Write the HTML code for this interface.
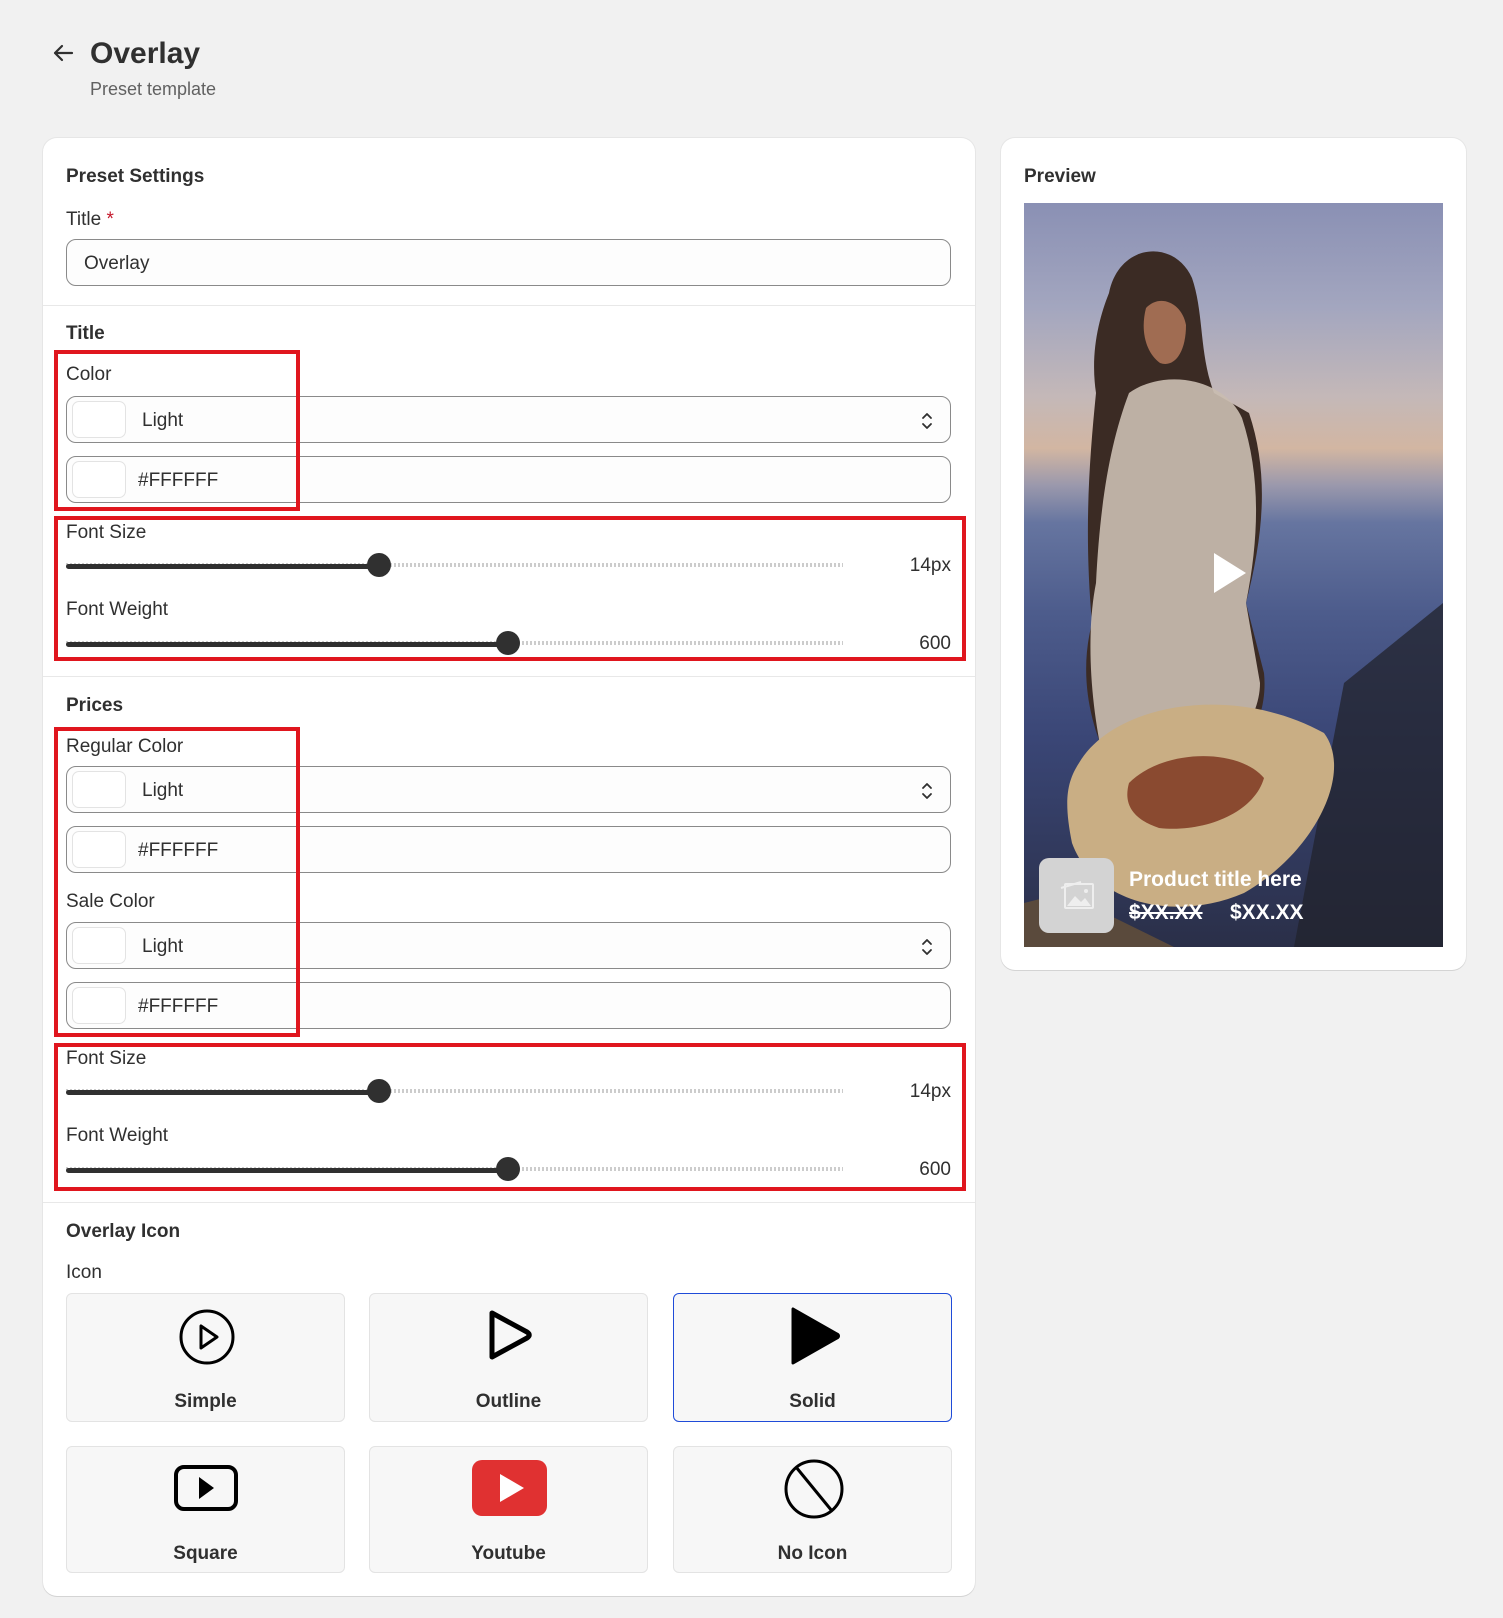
<!DOCTYPE html>
<html><head><meta charset="utf-8"><style>
*{box-sizing:border-box;margin:0;padding:0}
body{width:1503px;height:1618px;background:#f1f1f1;font-family:"Liberation Sans",Arial,sans-serif;color:#303030;position:relative;overflow:hidden}
.a{position:absolute}
.card{position:absolute;background:#fff;border-radius:14px;box-shadow:0 1px 0 #d4d4d4,0 0 0 1px #e6e6e6}
.h{font-weight:bold;font-size:19px}
.lbl{font-size:19px;color:#303030}
.inp{position:absolute;left:66px;width:885px;height:47px;border:1px solid #8a8a8a;border-radius:10px;background:#fdfdfd}
.sw{position:absolute;left:5px;top:4px;width:54px;height:37px;border:1px solid #e3e3e3;border-radius:7px;background:#fff}
.it{position:absolute;left:75px;top:13px;font-size:19px}
.div{position:absolute;left:43px;width:932px;height:1px;background:#e8e8e8}
.red{position:absolute;border:4px solid #e0161e}
.track{position:absolute;left:66px;width:777px;height:4px;background:repeating-linear-gradient(90deg,#ccc 0 2px,transparent 2px 4px);top:-2px}
.fill{position:absolute;left:0;top:-1px;height:5px;background:#303030;border-radius:3px}
.thumb{position:absolute;width:24px;height:24px;border-radius:50%;background:#303030;top:-12px}
.val{position:absolute;right:552px;font-size:19px}
.tile{position:absolute;width:279px;background:#f7f7f7;border:1px solid #e3e3e3;border-radius:6px}
.tl{position:absolute;width:100%;text-align:center;font-weight:bold;font-size:19px}
.ud{position:absolute;right:16px;top:13px}
</style></head><body>

<svg class="a" style="left:52px;top:43px" width="22" height="20" viewBox="0 0 22 20"><path d="M20 10H3M10 3L3 10l7 7" fill="none" stroke="#303030" stroke-width="2.2" stroke-linecap="round" stroke-linejoin="round"/></svg>
<div class="a" style="left:90px;top:37px;font-size:30px;font-weight:bold">Overlay</div>
<div class="a" style="left:90px;top:79px;font-size:18px;color:#616161">Preset template</div>

<div class="card" style="left:43px;top:138px;width:932px;height:1458px"></div>
<div class="a h" style="left:66px;top:166px">Preset Settings</div>
<div class="a lbl" style="left:66px;top:209px">Title <span style="color:#c4162a">*</span></div>
<div class="inp" style="top:239px"><div class="it" style="left:17px">Overlay</div></div>
<div class="div" style="top:305px"></div>

<div class="a h" style="left:66px;top:323px">Title</div>
<div class="a lbl" style="left:66px;top:364px">Color</div>
<div class="inp" style="top:396px"><div class="sw"></div><div class="it">Light</div>
<svg class="ud" width="14" height="22" viewBox="0 0 14 22"><path d="M3 8l4-4 4 4M3 14l4 4 4-4" fill="none" stroke="#303030" stroke-width="1.8" stroke-linecap="round" stroke-linejoin="round"/></svg></div>
<div class="inp" style="top:456px"><div class="sw"></div><div class="it" style="left:71px">#FFFFFF</div></div>
<div class="red" style="left:54px;top:350px;width:246px;height:161px"></div>

<div class="a lbl" style="left:66px;top:522px">Font Size</div>
<div class="a" style="left:0;top:565px;width:1503px"><div class="track"></div><div class="fill" style="left:66px;width:313px"></div><div class="thumb" style="left:367px"></div><div class="val" style="top:-10px">14px</div></div>
<div class="a lbl" style="left:66px;top:599px">Font Weight</div>
<div class="a" style="left:0;top:643px;width:1503px"><div class="track"></div><div class="fill" style="left:66px;width:442px"></div><div class="thumb" style="left:496px"></div><div class="val" style="top:-10px">600</div></div>
<div class="red" style="left:54px;top:516px;width:912px;height:145px"></div>
<div class="div" style="top:676px"></div>

<div class="a h" style="left:66px;top:695px">Prices</div>
<div class="a lbl" style="left:66px;top:736px">Regular Color</div>
<div class="inp" style="top:766px"><div class="sw"></div><div class="it">Light</div>
<svg class="ud" width="14" height="22" viewBox="0 0 14 22"><path d="M3 8l4-4 4 4M3 14l4 4 4-4" fill="none" stroke="#303030" stroke-width="1.8" stroke-linecap="round" stroke-linejoin="round"/></svg></div>
<div class="inp" style="top:826px"><div class="sw"></div><div class="it" style="left:71px">#FFFFFF</div></div>
<div class="a lbl" style="left:66px;top:891px">Sale Color</div>
<div class="inp" style="top:922px"><div class="sw"></div><div class="it">Light</div>
<svg class="ud" width="14" height="22" viewBox="0 0 14 22"><path d="M3 8l4-4 4 4M3 14l4 4 4-4" fill="none" stroke="#303030" stroke-width="1.8" stroke-linecap="round" stroke-linejoin="round"/></svg></div>
<div class="inp" style="top:982px"><div class="sw"></div><div class="it" style="left:71px">#FFFFFF</div></div>
<div class="red" style="left:54px;top:727px;width:246px;height:310px"></div>

<div class="a lbl" style="left:66px;top:1048px">Font Size</div>
<div class="a" style="left:0;top:1091px;width:1503px"><div class="track"></div><div class="fill" style="left:66px;width:313px"></div><div class="thumb" style="left:367px"></div><div class="val" style="top:-10px">14px</div></div>
<div class="a lbl" style="left:66px;top:1125px">Font Weight</div>
<div class="a" style="left:0;top:1169px;width:1503px"><div class="track"></div><div class="fill" style="left:66px;width:442px"></div><div class="thumb" style="left:496px"></div><div class="val" style="top:-10px">600</div></div>
<div class="red" style="left:54px;top:1043px;width:912px;height:148px"></div>
<div class="div" style="top:1202px"></div>

<div class="a h" style="left:66px;top:1221px">Overlay Icon</div>
<div class="a lbl" style="left:66px;top:1262px">Icon</div>

<div class="tile" style="left:66px;top:1293px;height:129px">
<svg class="a" style="left:111px;top:14px" width="58" height="58" viewBox="0 0 58 58"><circle cx="29" cy="29" r="26" fill="none" stroke="#000" stroke-width="3"/><path d="M23 18v22l16-11z" fill="none" stroke="#000" stroke-width="3" stroke-linejoin="round"/></svg>
<div class="tl" style="top:97px">Simple</div></div>
<div class="tile" style="left:369px;top:1293px;height:129px">
<svg class="a" style="left:117px;top:14px" width="46" height="54" viewBox="0 0 46 54"><path d="M5 5v44l35-19c3-2 3-4 0-6z" fill="none" stroke="#000" stroke-width="5" stroke-linejoin="round"/></svg>
<div class="tl" style="top:97px">Outline</div></div>
<div class="tile" style="left:673px;top:1293px;height:129px;background:#f7f7f7;border:1.5px solid #1f4bd8">
<svg class="a" style="left:115px;top:12px" width="52" height="60" viewBox="0 0 52 60"><path d="M4 3v54l44-25c2-1 2-3 0-4z" fill="#000" stroke="#000" stroke-width="3" stroke-linejoin="round"/></svg>
<div class="tl" style="top:97px">Solid</div></div>

<div class="tile" style="left:66px;top:1446px;height:127px">
<svg class="a" style="left:106px;top:17px" width="66" height="48" viewBox="0 0 66 48"><rect x="3" y="3" width="60" height="42" rx="8" fill="none" stroke="#000" stroke-width="4"/><path d="M26 13v22l15-11z" fill="#000"/></svg>
<div class="tl" style="top:96px">Square</div></div>
<div class="tile" style="left:369px;top:1446px;height:127px">
<svg class="a" style="left:102px;top:13px" width="75" height="56" viewBox="0 0 75 56"><rect x="0" y="0" width="75" height="56" rx="10" fill="#e03131"/><path d="M28 14v28l24-14z" fill="#fff"/></svg>
<div class="tl" style="top:96px">Youtube</div></div>
<div class="tile" style="left:673px;top:1446px;height:127px">
<svg class="a" style="left:109px;top:11px" width="62" height="62" viewBox="0 0 62 62"><circle cx="31" cy="31" r="28" fill="none" stroke="#000" stroke-width="3"/><path d="M13 9l36 44" stroke="#000" stroke-width="3"/></svg>
<div class="tl" style="top:96px">No Icon</div></div>

<div class="card" style="left:1001px;top:138px;width:465px;height:832px"></div>
<div class="a h" style="left:1024px;top:166px">Preview</div>
<div class="a" style="left:1024px;top:203px;width:419px;height:744px;overflow:hidden;background:linear-gradient(180deg,#8a90b4 0%,#a3a6bf 14%,#c4b8b8 26%,#d2b6a2 33%,#9a98ac 38%,#6675a0 43%,#4d5c8c 55%,#3a4676 72%,#2a2f48 100%)">
<svg width="419" height="744" viewBox="0 0 419 744" style="position:absolute;left:0;top:0">
<path d="M320 480 L419 400 L419 744 L270 744z" fill="#22232c" opacity=".75"/>
<path d="M85 90 C95 40 150 35 168 75 C180 110 175 150 190 190 L225 210 C245 270 240 330 222 400 L240 470 C245 520 215 560 190 560 L85 560 C65 520 55 470 68 420 C60 330 65 260 72 190 C66 150 75 115 85 90z" fill="#3b2b24"/>
<path d="M105 190 C140 165 200 175 218 215 C236 270 236 330 222 400 L236 480 C236 520 200 560 170 560 L80 560 C66 500 62 430 72 380 C76 300 86 240 105 190z" fill="#c9bcb0" opacity=".92"/>
<path d="M122 105 C136 90 158 100 162 122 C162 150 150 165 136 160 C122 150 116 128 122 105z" fill="#a06c52"/>
<path d="M55 560 C90 500 210 480 300 530 C330 570 290 650 220 690 C150 720 70 700 48 640 C40 600 42 580 55 560z" fill="#c9ae84"/>
<path d="M105 580 C140 545 215 545 240 575 C230 610 180 630 135 625 C105 615 100 598 105 580z" fill="#8a4a30"/>
<path d="M40 690 L150 744 L0 744 L0 700z" fill="#5a4a3c"/>
<path d="M190 350 v40 l32 -20z" fill="#fff"/>
</svg>
<div class="a" style="left:15px;top:655px;width:75px;height:75px;border-radius:10px;background:#d3d3d3">
<svg class="a" style="left:18px;top:20px" width="40" height="34" viewBox="0 0 40 34"><rect x="8" y="6" width="28" height="24" rx="1" fill="none" stroke="#eee" stroke-width="2"/><path d="M4 10l20-6" stroke="#eee" stroke-width="2"/><path d="M10 28l8-10 6 6 4-4 6 8z" fill="#eee"/><circle cx="29" cy="13" r="2" fill="#eee"/></svg></div>
<div class="a" style="left:105px;top:665px;color:#fff;font-weight:bold;font-size:21px">Product title here</div>
<div class="a" style="left:105px;top:698px;color:#fff;font-weight:bold;font-size:21px;text-decoration:line-through">$XX.XX</div>
<div class="a" style="left:206px;top:698px;color:#fff;font-weight:bold;font-size:21px">$XX.XX</div>
</div>
</body></html>
